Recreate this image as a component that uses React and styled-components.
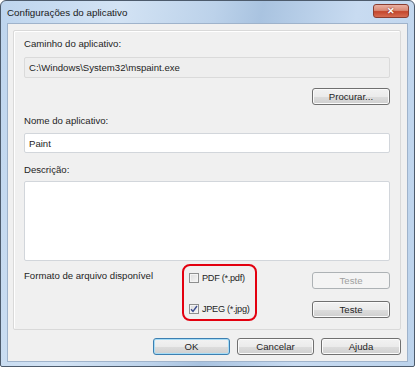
import styled, { createGlobalStyle } from 'styled-components'

const GlobalStyle = createGlobalStyle`
    * {
        box-sizing: border-box;
    }
    body {
        margin: 0;
        background: #ffffff;
        font-family: "Liberation Sans", Arial, sans-serif;
    }
`

const Check = () => (
    <svg width="8" height="8" viewBox="0 0 8 8">
        <path d="M1 4.2 L3 6.5 L7 1" fill="none" stroke="#3c4d8f" strokeWidth="1.4" />
    </svg>
)

const App = () => {
  return (
    <>
      <GlobalStyle />
      <Window>
        <TitleBar>
            <Title>Configurações do aplicativo</Title>
            <CloseButton>✕</CloseButton>
        </TitleBar>
        <Client>
            <Panel>
                <Label>Caminho do aplicativo:</Label>
                <Field readOnly>C:\Windows\System32\mspaint.exe</Field>
                <Button $width={78} $right $top={10}>Procurar...</Button>
                <Label $top={9}>Nome do aplicativo:</Label>
                <Field>Paint</Field>
                <Label $top={10}>Descrição:</Label>
                <TextArea />
                <FormatRow>
                    <FormatLabel>Formato de arquivo disponível</FormatLabel>
                    <Highlight>
                        <CheckRow>
                            <Box />
                            <span>PDF (*.pdf)</span>
                        </CheckRow>
                        <CheckRow>
                            <Box><Check /></Box>
                            <span>JPEG (*.jpg)</span>
                        </CheckRow>
                    </Highlight>
                    <TestColumn>
                        <Button $width={78} disabled>Teste</Button>
                        <Button $width={78}>Teste</Button>
                    </TestColumn>
                </FormatRow>
            </Panel>
            <ButtonRow>
                <Button $width={77} $primary>OK</Button>
                <Button $width={77}>Cancelar</Button>
                <Button $width={80}>Ajuda</Button>
            </ButtonRow>
        </Client>
      </Window>
    </>
  )
}

const Window = styled.div`
    width: 415px;
    height: 367px;
    display: flex;
    flex-direction: column;
    padding: 0 6px 4px 6px;
    border: 1px solid #4d5b6c;
    border-radius: 6px 6px 2px 2px;
    background: linear-gradient(100deg, #bed5ee 0%, #d3e3f4 25%, #bcd2ea 45%, #a9c3e0 55%, #c8dbf1 75%, #bcd3ec 100%);
`

const TitleBar = styled.div`
    height: 22px;
    display: flex;
    align-items: flex-start;
    justify-content: space-between;
`

const Title = styled.div`
    font-size: 9.8px;
    line-height: 12px;
    margin-top: 6px;
    color: #1a1a1a;
`

const CloseButton = styled.div`
    width: 36px;
    height: 14px;
    margin-top: 3px;
    margin-right: -1px;
    display: flex;
    align-items: center;
    justify-content: center;
    border: 1px solid #8a3d30;
    border-radius: 3px;
    background: linear-gradient(180deg, #eab0a2 0%, #d98a76 45%, #c4462c 55%, #d66c52 100%);
    color: #ffffff;
    font-size: 9px;
    font-weight: bold;
    text-shadow: 0 0 2px #6a1a10;
`

const Client = styled.div`
    flex: 1;
    display: flex;
    flex-direction: column;
    background: #f0f0f0;
    border: 1px solid #9fb3cb;
    padding: 6px 6px 0 5px;
`

const Panel = styled.div`
    display: flex;
    flex-direction: column;
    border: 1px solid #d9d9d9;
    box-shadow: inset 1px 1px 0 #ffffff;
    border-radius: 2px;
    padding: 6px 10px 8px 10px;
`

const Label = styled.div`
    font-size: 9.6px;
    line-height: 14px;
    color: #1e1e1e;
    margin-top: ${p => p.$top || 0}px;
    margin-bottom: ${p => p.$top ? 5 : 6}px;
`

const Field = styled.div`
    height: ${p => p.readOnly ? 21 : 20}px;
    display: flex;
    align-items: center;
    padding-left: 4px;
    font-size: 9.6px;
    color: #1e1e1e;
    background: ${p => p.readOnly ? '#eeeeee' : '#ffffff'};
    border: 1px solid ${p => p.readOnly ? '#dadada' : '#d2d6db'};
    border-radius: 2px;
`

const TextArea = styled.div`
    height: 80px;
    margin-top: -1px;
    background: #ffffff;
    border: 1px solid #d2d6db;
    border-radius: 2px;
`

const Button = styled.button`
    width: ${p => p.$width}px;
    height: 17px;
    margin-top: ${p => p.$top || 0}px;
    align-self: ${p => p.$right ? 'flex-end' : 'auto'};
    padding: 0;
    font-family: "Liberation Sans", Arial, sans-serif;
    font-size: 9.6px;
    color: #1e1e1e;
    border: 1px solid ${p => p.$primary ? '#3c7fb1' : '#707070'};
    border-radius: 3px;
    background: linear-gradient(180deg, #f2f2f2 0%, #ebebeb 50%, #dddddd 51%, #cfcfcf 100%);
    box-shadow: inset 0 0 0 1px ${p => p.$primary ? '#a6dcf6' : '#fbfbfb'};

    &:disabled {
        color: #a0a0a0;
        border-color: #adb2b5;
        background: #f4f4f4;
        box-shadow: none;
    }
`

const FormatRow = styled.div`
    display: flex;
    align-items: flex-start;
`

const FormatLabel = styled.div`
    width: 158px;
    margin-top: 8px;
    font-size: 9.6px;
    line-height: 14px;
    color: #1e1e1e;
`

const Highlight = styled.div`
    width: 75px;
    height: 57px;
    margin-top: 3px;
    display: flex;
    flex-direction: column;
    justify-content: space-between;
    padding: 7px 0 5px 5px;
    border: 2px solid #e3000f;
    border-radius: 8px;
`

const CheckRow = styled.div`
    display: flex;
    align-items: center;
    gap: 3px;
    white-space: nowrap;
    font-size: 9.2px;
    letter-spacing: -0.3px;
    color: #1e1e1e;
`

const Box = styled.div`
    width: 10px;
    height: 10px;
    flex-shrink: 0;
    display: flex;
    align-items: center;
    justify-content: center;
    border: 1px solid #8e8f8f;
    background: linear-gradient(135deg, #dcdcdc 0%, #f6f6f6 100%);
    box-shadow: inset 0 0 0 1px #f4f4f4;
`

const TestColumn = styled.div`
    margin-left: auto;
    margin-top: 11px;
    display: flex;
    flex-direction: column;
    gap: 12px;
`

const ButtonRow = styled.div`
    display: flex;
    justify-content: flex-end;
    gap: 7px;
    margin-top: 8px;
`

export default App
